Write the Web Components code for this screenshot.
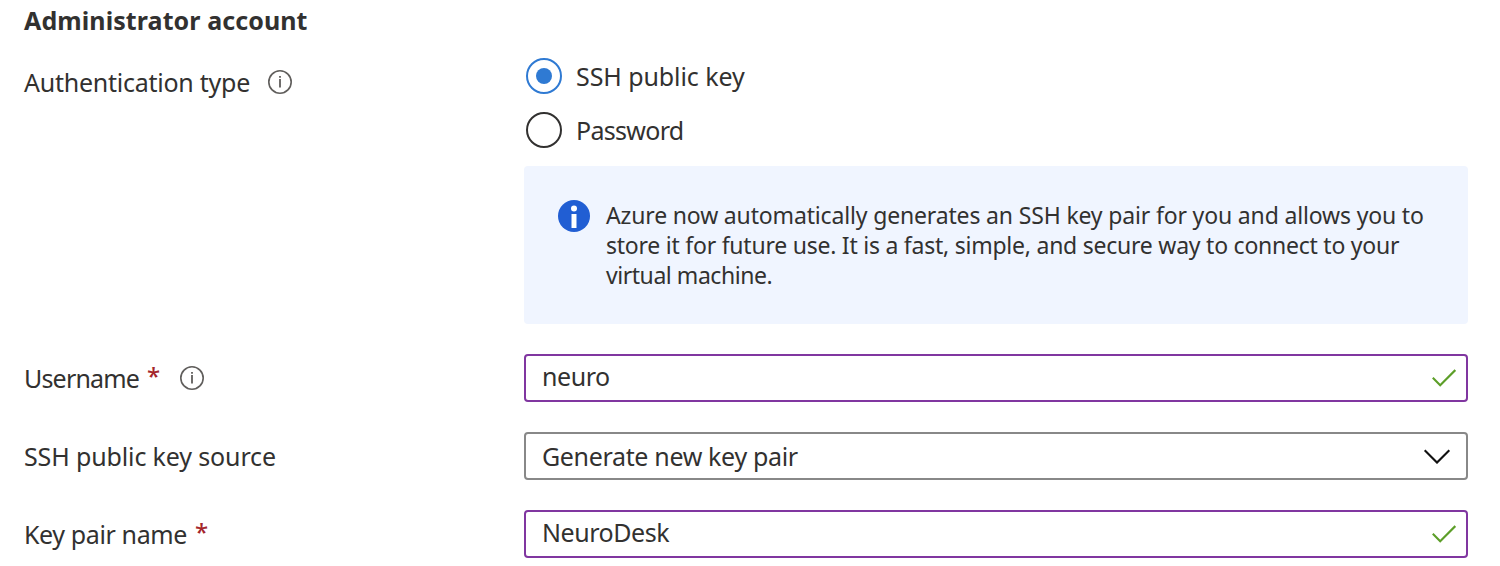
<!DOCTYPE html>
<html lang="en">
<head>
<meta charset="utf-8">
<title>Administrator account</title>
<style>
  body { margin: 0; background: #fff; color: #323130; font: 25px/36px "Noto Sans", "Open Sans", sans-serif; }
</style>
</head>
<body>
<account-form></account-form>

<template id="account-form">
  <style>
    :host { display: block; padding: 2px 32px 0 24px; }
    h2 { margin: 0 0 20px; font-size: 25px; line-height: 36px; font-weight: 700; letter-spacing: .09px; }
    .radios { display: flex; flex-direction: column; gap: 18px; }
    form-row { margin-bottom: 30px; }
  </style>
  <h2>Administrator account</h2>
  <form-row top info>
    <fit-text slot="label" style="--ls:-.25px">Authentication type</fit-text>
    <div class="radios">
      <radio-option checked><fit-text style="--ls:-.079px">SSH public key</fit-text></radio-option>
      <radio-option><fit-text style="--ls:-.7px">Password</fit-text></radio-option>
      <info-banner>
        <fit-text style="--ls:-.157px">Azure now automatically generates an SSH key pair for you and allows you to</fit-text>
        <fit-text style="--ls:-.236px">store it for future use. It is a fast, simple, and secure way to connect to your</fit-text>
        <fit-text style="--ls:-.45px">virtual machine.</fit-text>
      </info-banner>
    </div>
  </form-row>
  <form-row required info>
    <fit-text slot="label" style="--ls:-.82px">Username</fit-text>
    <field-box valid><fit-text style="--ls:-.45px">neuro</fit-text></field-box>
  </form-row>
  <form-row>
    <fit-text slot="label" style="--ls:-.133px">SSH public key source</fit-text>
    <field-box><fit-text style="--ls:-.34px">Generate new key pair</fit-text></field-box>
  </form-row>
  <form-row required>
    <fit-text slot="label" style="--ls:-.38px">Key pair name</fit-text>
    <field-box valid><fit-text style="--ls:-.45px">NeuroDesk</fit-text></field-box>
  </form-row>
</template>

<template id="fit-text">
  <style>:host { display: block; white-space: nowrap; letter-spacing: var(--ls, 0); }</style>
  <slot></slot>
</template>

<template id="form-row">
  <style>
    :host { display: grid; grid-template-columns: 500px 1fr; align-items: center; }
    :host([top]) { align-items: start; }
    .label { display: flex; align-items: center; height: 36px; }
    :host([top]) .label { padding-top: 6px; }
    .star, svg { display: none; }
    :host([required]) .star { display: block; color: #a4262c; margin: 0 0 4px 8px; width: 15px; font-size: 24px; font-weight: 500; }
    :host([info]) svg { display: block; margin: 0 0 0 18px; }
  </style>
  <div class="label">
    <slot name="label"></slot><span class="star">*</span>
    <svg width="24" height="24" viewBox="0 0 24 24">
      <circle cx="12" cy="12" r="11.2" fill="none" stroke="#605e5c" stroke-width="1.6"/>
      <path d="M12 9V17.6M12 6V7.8" stroke="#605e5c" stroke-width="1.8"/>
    </svg>
  </div>
  <slot></slot>
</template>

<template id="radio-option">
  <style>
    :host { display: flex; align-items: center; height: 36px; padding-left: 2px; gap: 14px; }
    .ring { box-sizing: border-box; width: 36px; height: 36px; border: 2px solid #323130; border-radius: 50%; display: grid; place-items: center; }
    :host([checked]) .ring { border-color: #2f7ad3; }
    :host([checked]) .ring::after { content: ""; width: 16px; height: 16px; border-radius: 50%; background: #2f7ad3; }
  </style>
  <span class="ring"></span><slot></slot>
</template>

<template id="info-banner">
  <style>
    :host { display: flex; gap: 16px; box-sizing: border-box; height: 158px; padding: 34px; background: #f0f5ff; border-radius: 4px; font-size: 23px; line-height: 30px; }
    svg { flex: none; }
  </style>
  <svg width="32" height="32" viewBox="0 0 32 32">
    <circle cx="16" cy="16" r="16" fill="#215ed3"/>
    <circle cx="16" cy="8.4" r="3" fill="#fff"/>
    <path d="M13.5 14h5v14h-5z" fill="#fff"/>
  </svg>
  <div><slot></slot></div>
</template>

<template id="field-box">
  <style>
    :host { display: flex; align-items: center; justify-content: space-between; box-sizing: border-box; height: 48px; padding: 0 15px 0 16px; border: 2px solid #888; border-radius: 4px; }
    :host([valid]) { border-color: #8036a0; padding-right: 10px; }
    :host([valid]) ::slotted(*) { margin-bottom: 4px; }
    .check, :host([valid]) .chevron { display: none; }
    :host([valid]) .check { display: block; }
  </style>
  <slot></slot>
  <svg class="chevron" width="28" height="16" viewBox="0 0 28 16"><path d="M1.7 2.3L14 14.6L26.3 2.3" fill="none" stroke="#111" stroke-width="2.1"/></svg>
  <svg class="check" width="24" height="18" viewBox="0 0 24 18"><path d="M.8 8.8L8.2 16.2L23.3 1.1" fill="none" stroke="#5c9e28" stroke-width="2.1"/></svg>
</template>

<script>
  for (const name of ["fit-text", "form-row", "radio-option", "info-banner", "field-box", "account-form"]) {
    customElements.define(name, class extends HTMLElement {
      constructor() {
        super();
        this.attachShadow({ mode: "open" }).append(document.getElementById(name).content.cloneNode(true));
      }
    });
  }
</script>
</body>
</html>
